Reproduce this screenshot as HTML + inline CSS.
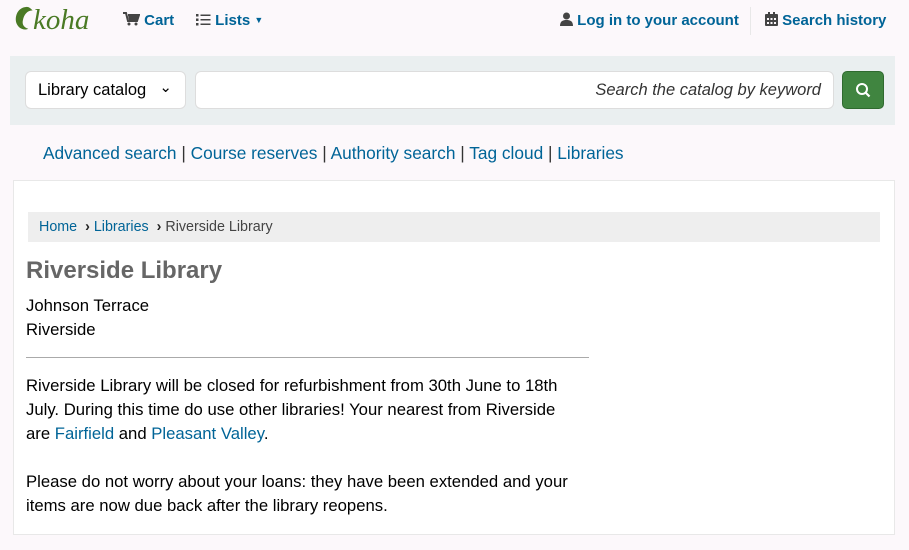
<!DOCTYPE html>
<html><head><meta charset="utf-8"><style>
body{margin:0;background:#fcf8fb;font-family:"Liberation Sans",sans-serif;width:909px;height:550px;overflow:hidden;position:relative;color:#000}
a{color:#006497;text-decoration:none}
.abs{position:absolute}
.nav{font-weight:bold;font-size:15px;color:#006497;top:12px}
.sb{left:10px;top:56px;width:885px;height:69px;background:#eaeff0}
.sel{left:25px;top:71px;width:161px;height:38px;background:#fff;border:1px solid #ddd;border-radius:6px;box-sizing:border-box;font-size:16.5px;padding:9px 12px;}
.inp{left:195px;top:71px;width:639px;height:38px;background:#fff;border:1px solid #ddd;border-radius:6px;box-sizing:border-box;font-size:16.5px;font-style:italic;color:#333;text-align:right;padding:9px 12px}
.btn{left:842px;top:71px;width:42px;height:38px;background:#408540;border:1px solid #2f6a2f;border-radius:5px;box-sizing:border-box}
.links{left:43px;top:143px;font-size:17.3px;color:#333}
.box{left:13px;top:180px;width:882px;height:355px;background:#fff;border:1px solid #e8e8e8;box-sizing:border-box}
.bc{left:28px;top:212px;width:852px;height:30px;background:#eee;font-size:14.3px;color:#444;line-height:31px;padding-left:11px;box-sizing:border-box}
p{margin:0}
</style></head><body>
<div class="abs" style="left:13px;top:4px;font-family:'Liberation Serif',serif;font-style:italic;font-size:29px;color:#4a7a25">
<svg width="22" height="28" viewBox="0 0 20 26" style="vertical-align:-4px;margin-right:-2px"><path d="M11 2C4 3 1 11 3 17c2 5 7 7 11 5-4-1-6-4-5-8 1-5 4-9 9-9C16 3 14 1 11 2z" fill="#4a7a25"/></svg>koha</div>
<div class="abs nav" style="left:123px"><svg width="17" height="14" viewBox="0 0 17 14" style="vertical-align:-1px"><path d="M0 1h3l2 8h9l2-6H5" fill="none" stroke="#444" stroke-width="2"/><path d="M5 3h11l-2 6H6z" fill="#444"/><circle cx="6" cy="12" r="1.5" fill="#444"/><circle cx="13" cy="12" r="1.5" fill="#444"/></svg> Cart</div>
<div class="abs nav" style="left:196px"><svg width="15" height="13" viewBox="0 0 15 13" style="vertical-align:-1px" fill="#444"><rect x="0" y="1" width="2.5" height="2.5"/><rect x="0" y="5.5" width="2.5" height="2.5"/><rect x="0" y="10" width="2.5" height="2.5"/><rect x="4.5" y="1.5" width="10" height="1.5"/><rect x="4.5" y="6" width="10" height="1.5"/><rect x="4.5" y="10.5" width="10" height="1.5"/></svg> Lists <span style="font-size:9px;color:#006497;vertical-align:2px">▼</span></div>
<div class="abs nav" style="left:560px"><svg width="13" height="14" viewBox="0 0 13 14" style="vertical-align:-1px" fill="#444"><circle cx="6.5" cy="4" r="3.5"/><path d="M0 14c0-5 3-6 6.5-6S13 9 13 14z"/></svg> Log in to your account</div>
<div class="abs" style="left:750px;top:7px;width:1px;height:28px;background:#e8e8e8"></div>
<div class="abs nav" style="left:765px"><svg width="13" height="14" viewBox="0 0 13 14" style="vertical-align:-1px" fill="#444"><rect x="0" y="2" width="13" height="12" rx="1"/><rect x="3" y="0" width="2" height="3"/><rect x="8" y="0" width="2" height="3"/><g fill="#fcf8fb"><rect x="2" y="6" width="2" height="2"/><rect x="5.5" y="6" width="2" height="2"/><rect x="9" y="6" width="2" height="2"/><rect x="2" y="10" width="2" height="2"/><rect x="5.5" y="10" width="2" height="2"/><rect x="9" y="10" width="2" height="2"/></g></svg> Search history</div>
<div class="abs sb"></div>
<div class="abs sel">Library catalog <span style="position:absolute;right:13px;top:6px;font-size:15px">⌄</span></div>
<div class="abs inp">Search the catalog by keyword</div>
<div class="abs btn"><svg width="40" height="36" viewBox="0 0 40 36"><circle cx="19" cy="17" r="5" fill="none" stroke="#fff" stroke-width="2"/><path d="M22.5 20.5l4 4" stroke="#fff" stroke-width="2.2"/></svg></div>
<div class="abs links"><a>Advanced search</a> | <a>Course reserves</a> | <a>Authority search</a> | <a>Tag cloud</a> | <a>Libraries</a></div>
<div class="abs box"></div>
<div class="abs bc"><a>Home</a> &nbsp;<b style="color:#222">›</b> <a>Libraries</a> &nbsp;<b style="color:#222">›</b> Riverside Library</div>
<div class="abs" style="left:26px;top:257px;font-size:24px;font-weight:bold;color:#666">Riverside Library</div>
<div class="abs" style="left:26px;top:294px;font-size:16.7px;line-height:24px">Johnson Terrace<br>Riverside</div>
<div class="abs" style="left:26px;top:357px;width:563px;height:1px;background:#aaa"></div>
<div class="abs" style="left:26px;top:374px;width:555px;font-size:16.7px;line-height:24px">
<p>Riverside Library will be closed for refurbishment from 30th June to 18th July. During this time do use other libraries! Your nearest from Riverside are <a>Fairfield</a> and <a>Pleasant Valley</a>.</p><br>
<p>Please do not worry about your loans: they have been extended and your items are now due back after the library reopens.</p></div>
</body></html>
